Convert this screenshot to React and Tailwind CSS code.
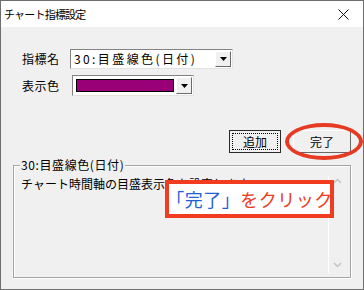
const jp = { fontFamily: '"Noto Sans CJK JP", "Noto Sans", sans-serif' };

const DropButton = () => (
  <div className="w-[16px] h-full flex items-center justify-center bg-[#f0f0f0] border-t border-l border-t-white border-l-white border-b border-r border-b-[#696969] border-r-[#696969]">
    <svg width="7" height="4" viewBox="0 0 7 4">
      <path d="M0 0h7L3.5 4z" fill="#000" />
    </svg>
  </div>
);

const App = () => {
  return (
    <div
      className="w-[364px] h-[290px] border border-[#6e6e6e] bg-[#f0f0f0] flex flex-col relative overflow-hidden text-[12px] text-black"
      style={jp}
    >
      {/* タイトルバー */}
      <div className="h-[26px] bg-white flex items-center justify-between pl-[3px] pr-[14px] shrink-0">
        <span className="text-[11px] leading-none tracking-[-0.8px]">チャート指標設定</span>
        <svg width="11" height="11" viewBox="0 0 11 11">
          <path d="M0.5 0.5l10 10M10.5 0.5l-10 10" stroke="#111" strokeWidth="1" />
        </svg>
      </div>

      {/* 本体 */}
      <div className="flex-1 flex flex-col pt-[22px] px-[11px]">
        {/* 指標名 */}
        <div className="flex items-center pl-[10px]">
          <span className="w-[48px] leading-none tracking-[0.5px]">指標名</span>
          <div className="w-[163px] h-[20px] bg-white flex items-stretch border border-t-[#828282] border-l-[#828282] border-b-[#e3e3e3] border-r-[#e3e3e3] p-px">
            <span className="flex-1 pl-[2px] leading-[16px] whitespace-nowrap tracking-[2.4px]">30:目盛線色(日付)</span>
            <DropButton />
          </div>
        </div>

        {/* 表示色 */}
        <div className="flex items-center pl-[10px] mt-[6px]">
          <span className="w-[50px] leading-none tracking-[0.5px]">表示色</span>
          <div className="w-[122px] h-[21px] bg-white flex items-stretch border border-t-[#828282] border-l-[#828282] border-b-[#e3e3e3] border-r-[#e3e3e3] p-px">
            <div className="flex-1 p-[2px]">
              <div className="w-full h-full bg-[#990077] border border-black" />
            </div>
            <DropButton />
          </div>
        </div>

        {/* ボタン */}
        <div className="flex justify-end gap-[12px] mt-[34px] pr-[1px]">
          <div className="w-[52px] h-[23px] border border-[#2b2b2b] bg-[#f0f0f0] p-[2px]">
            <div className="w-full h-full border border-dotted border-black flex items-center justify-center leading-none">
              追加
            </div>
          </div>
          <div className="w-[58px] h-[23px] bg-[#f0f0f0] border border-t-white border-l-white border-b-[#696969] border-r-[#696969] flex items-center justify-center leading-none">
            完了
          </div>
        </div>

        {/* グループ */}
        <div className="relative mt-[12px] mx-px h-[113px] border border-[#a5a5a5] shadow-[inset_1px_1px_0_#fff,1px_1px_0_#fff]">
          <span className="absolute -top-[8px] left-[6px] px-[1px] bg-[#f0f0f0] leading-[14px] whitespace-nowrap tracking-[0.6px]">
            30:目盛線色(日付)
          </span>
          <div className="flex h-full pt-[10px] pl-[7px] pr-[5px] pb-[4px]">
            <div className="flex-1 leading-[16px] whitespace-nowrap overflow-hidden">
              チャート時間軸の目盛表示色を設定します。
            </div>
            <div className="w-[17px] flex flex-col justify-between items-center border-l border-white pt-[2px] pb-[5px]">
              <svg width="9" height="6" viewBox="0 0 9 6">
                <path d="M1 5l3.5-3.5L8 5" stroke="#c3c3c3" strokeWidth="1.5" fill="none" />
              </svg>
              <svg width="9" height="6" viewBox="0 0 9 6">
                <path d="M1 1l3.5 3.5L8 1" stroke="#c3c3c3" strokeWidth="1.5" fill="none" />
              </svg>
            </div>
          </div>
        </div>
      </div>

      {/* 注釈: 完了ボタンの丸 */}
      <div className="absolute left-[284px] top-[122px] w-[78px] h-[37px] rounded-[50%] border-[4px] border-[#e63a23]" />

      {/* 注釈: 吹き出し */}
      <div className="absolute left-[164px] top-[179px] w-[169px] h-[38px] bg-white border-[4px] border-[#f23c1f] flex items-center justify-center">
        <span className="text-[18px] leading-none whitespace-nowrap tracking-[0.5px]">
          <span className="text-[#1f5fd8]">「完了」</span>
          <span className="text-[#ec3b1f]">をクリック</span>
        </span>
      </div>
    </div>
  );
};

export default App;
